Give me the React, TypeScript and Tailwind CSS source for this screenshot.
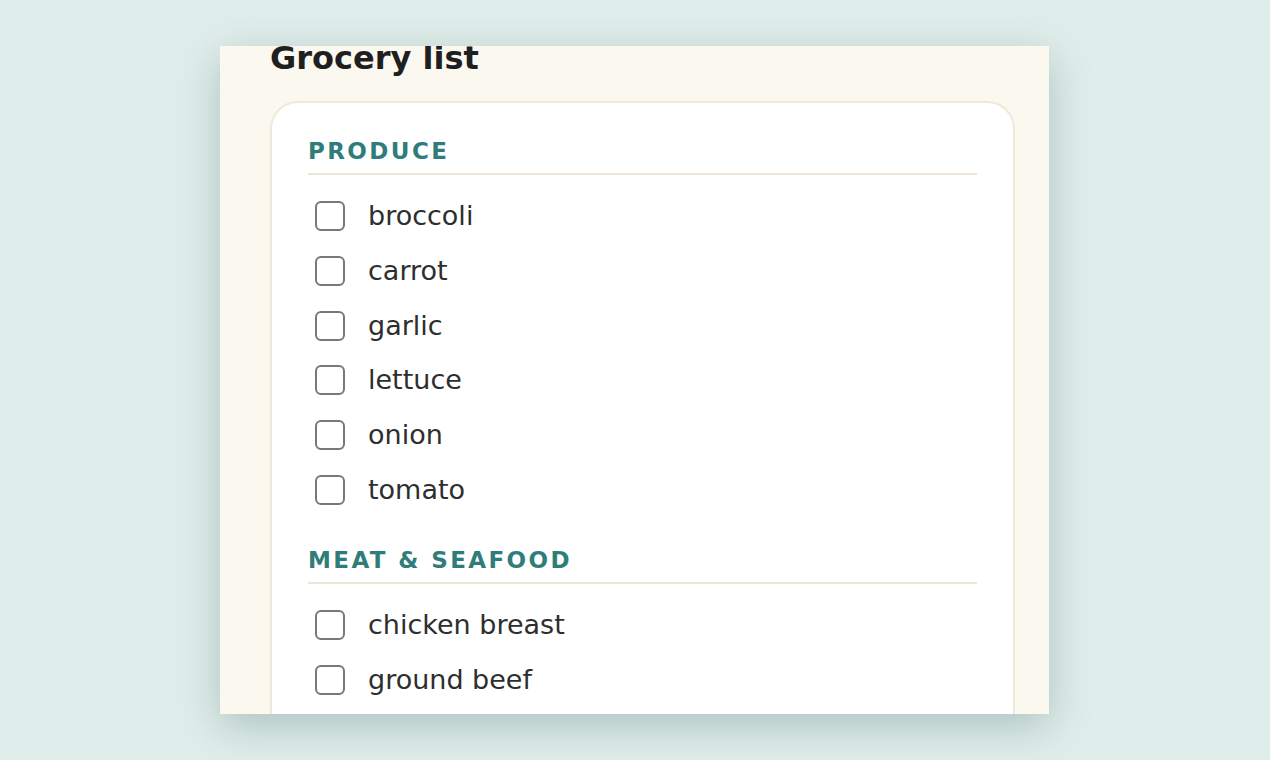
import React from "react";

const sections = [
  { title: "PRODUCE", items: ["broccoli", "carrot", "garlic", "lettuce", "onion", "tomato"] },
  { title: "MEAT & SEAFOOD", items: ["chicken breast", "ground beef"] },
];

export default function App() {
  return (
    <div className="w-[1270px] h-[760px] bg-[#e0eeeb] pt-[46px] overflow-hidden" style={{ fontFamily: '"DejaVu Sans", Verdana, sans-serif' }}>
      <div className="ml-[220px] w-[829px] h-[668px] overflow-hidden bg-[#fbf8f0] shadow-[0_12px_40px_rgba(40,80,80,0.28)] pl-[50px] pr-[34px]">
        <h1 className="mt-[-7px] text-[32px] leading-[38px] font-bold text-[#1f1f1f]">Grocery list</h1>
        <div className="mt-[24px] bg-white border-2 border-[#efe9da] rounded-[28px] px-[36px] pt-[35px] pb-10 h-[700px]">
          {sections.map((s, si) => (
            <div key={s.title} className={si > 0 ? "mt-[30px]" : ""}>
              <div className="text-[23px] leading-[26px] font-bold tracking-[2.4px] text-[#2f7d7a] pb-[9px] border-b-2 border-[#ede6d8]">
                {s.title}
              </div>
              <div className="mt-[14px]">
                {s.items.map((it) => (
                  <div key={it} className="h-[54.7px] flex items-center">
                    <div className="ml-[7px] w-[30px] h-[30px] rounded-[6px] border-2 border-[#787878] bg-white shrink-0" />
                    <span className="ml-[23px] text-[27px] leading-[32px] text-[#2e2e2e]">{it}</span>
                  </div>
                ))}
              </div>
            </div>
          ))}
        </div>
      </div>
    </div>
  );
}
